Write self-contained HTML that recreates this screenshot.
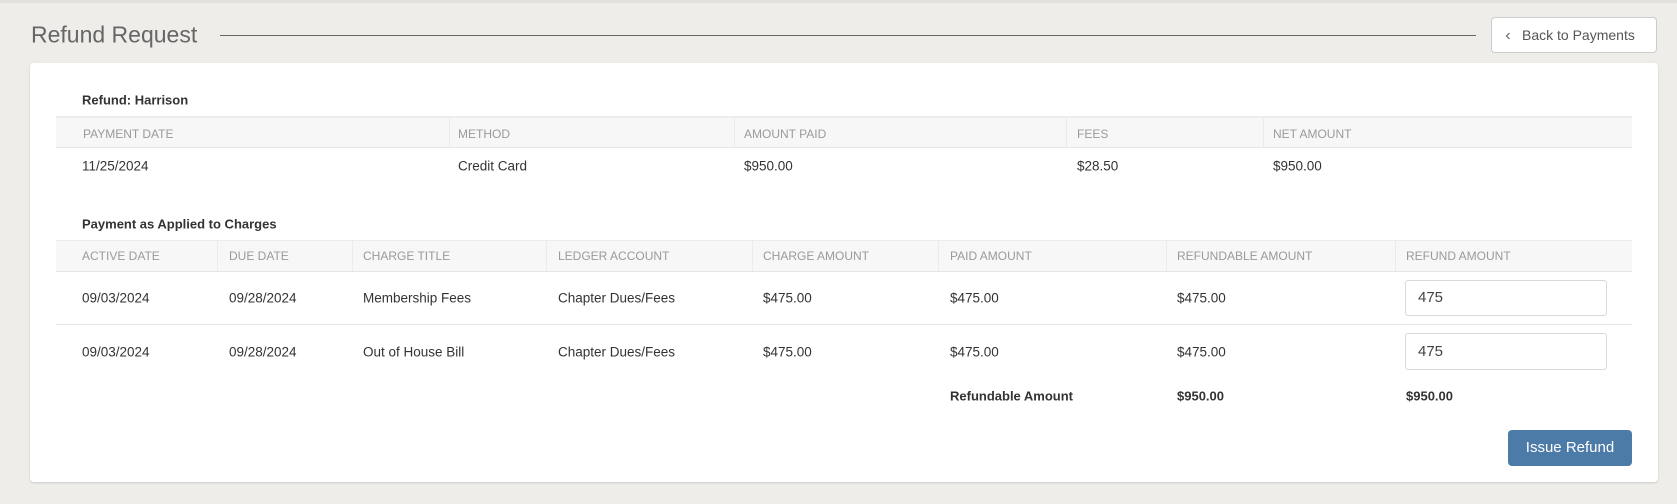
<!DOCTYPE html>
<html><head><meta charset="utf-8"><style>
*{margin:0;padding:0;box-sizing:border-box}
body{width:1677px;height:504px;background:#eeedea;font-family:"Liberation Sans",sans-serif;position:relative;overflow:hidden;color:#333}
.a{position:absolute;white-space:nowrap}
.t{font-size:13.5px;color:#333;transform:translateY(-50%)}
.h{font-size:12px;color:#9a9a9a;transform:translateY(-50%)}
.b{font-weight:bold;font-size:13px;color:#333;transform:translateY(-50%)}
.vl{position:absolute;width:1px;background:#ebebeb}
</style></head><body>
<div class="a" style="left:0;top:0;width:1677px;height:3px;background:#e2e1de"></div>
<div class="a" style="left:31px;top:35px;transform:translateY(-50%);font-size:23px;color:#666">Refund Request</div>
<div class="a" style="left:220px;top:35px;width:1256px;height:1px;background:#666"></div>
<div class="a" style="left:1491px;top:17px;width:166px;height:36px;background:#fff;border:1px solid #ccc;border-radius:4px;font-size:14px;color:#555;line-height:34px;padding-left:30px">Back to Payments</div>
<svg class="a" style="left:1505px;top:32px" width="6" height="8"><path d="M4.5 1 L1.5 4 L4.5 7" stroke="#666" stroke-width="1.2" fill="none"/></svg>

<div class="a" style="left:30px;top:63px;width:1628px;height:419px;background:#fff;border-radius:4px;box-shadow:0 1px 2px rgba(0,0,0,.15)"></div>

<div class="a b" style="left:82px;top:100px">Refund: Harrison</div>
<div class="a" style="left:56px;top:116px;width:1576px;height:32px;background:#f7f7f7;border-top:2px solid #ececec;border-bottom:1px solid #e6e6e6"></div>
<div class="vl" style="left:449px;top:118px;height:30px"></div>
<div class="vl" style="left:734px;top:118px;height:30px"></div>
<div class="vl" style="left:1066px;top:118px;height:30px"></div>
<div class="vl" style="left:1263px;top:118px;height:30px"></div>
<div class="a h" style="left:83px;top:134px">PAYMENT DATE</div>
<div class="a h" style="left:458px;top:134px">METHOD</div>
<div class="a h" style="left:744px;top:134px">AMOUNT PAID</div>
<div class="a h" style="left:1077px;top:134px">FEES</div>
<div class="a h" style="left:1273px;top:134px">NET AMOUNT</div>
<div class="a t" style="left:82px;top:166px">11/25/2024</div>
<div class="a t" style="left:458px;top:166px">Credit Card</div>
<div class="a t" style="left:744px;top:166px">$950.00</div>
<div class="a t" style="left:1077px;top:166px">$28.50</div>
<div class="a t" style="left:1273px;top:166px">$950.00</div>

<div class="a b" style="left:82px;top:224px">Payment as Applied to Charges</div>
<div class="a" style="left:56px;top:240px;width:1576px;height:32px;background:#f7f7f7;border-top:1px solid #ececec;border-bottom:1px solid #e6e6e6"></div>
<div class="vl" style="left:217px;top:241px;height:30px"></div>
<div class="vl" style="left:352px;top:241px;height:30px"></div>
<div class="vl" style="left:546px;top:241px;height:30px"></div>
<div class="vl" style="left:752px;top:241px;height:30px"></div>
<div class="vl" style="left:938px;top:241px;height:30px"></div>
<div class="vl" style="left:1166px;top:241px;height:30px"></div>
<div class="vl" style="left:1395px;top:241px;height:30px"></div>
<div class="a h" style="left:82px;top:256px">ACTIVE DATE</div>
<div class="a h" style="left:229px;top:256px">DUE DATE</div>
<div class="a h" style="left:363px;top:256px">CHARGE TITLE</div>
<div class="a h" style="left:558px;top:256px">LEDGER ACCOUNT</div>
<div class="a h" style="left:763px;top:256px">CHARGE AMOUNT</div>
<div class="a h" style="left:950px;top:256px">PAID AMOUNT</div>
<div class="a h" style="left:1177px;top:256px">REFUNDABLE AMOUNT</div>
<div class="a h" style="left:1406px;top:256px">REFUND AMOUNT</div>

<div class="a t" style="left:82px;top:298px">09/03/2024</div>
<div class="a t" style="left:229px;top:298px">09/28/2024</div>
<div class="a t" style="left:363px;top:298px">Membership Fees</div>
<div class="a t" style="left:558px;top:298px">Chapter Dues/Fees</div>
<div class="a t" style="left:763px;top:298px">$475.00</div>
<div class="a t" style="left:950px;top:298px">$475.00</div>
<div class="a t" style="left:1177px;top:298px">$475.00</div>
<div class="a" style="left:1405px;top:280px;width:202px;height:36px;border:1px solid #d9d9d9;border-radius:3px;font-size:15px;color:#444;line-height:34px;padding-left:12px">475</div>
<div class="a" style="left:56px;top:324px;width:1576px;height:1px;background:#e6e6e6"></div>

<div class="a t" style="left:82px;top:352px">09/03/2024</div>
<div class="a t" style="left:229px;top:352px">09/28/2024</div>
<div class="a t" style="left:363px;top:352px">Out of House Bill</div>
<div class="a t" style="left:558px;top:352px">Chapter Dues/Fees</div>
<div class="a t" style="left:763px;top:352px">$475.00</div>
<div class="a t" style="left:950px;top:352px">$475.00</div>
<div class="a t" style="left:1177px;top:352px">$475.00</div>
<div class="a" style="left:1405px;top:333px;width:202px;height:37px;border:1px solid #d9d9d9;border-radius:3px;font-size:15px;color:#444;line-height:35px;padding-left:12px">475</div>

<div class="a b" style="left:950px;top:396px">Refundable Amount</div>
<div class="a b" style="left:1177px;top:396px">$950.00</div>
<div class="a b" style="left:1406px;top:396px">$950.00</div>

<div class="a" style="left:1508px;top:430px;width:124px;height:36px;background:#4b7ba6;border-radius:4px;color:#fff;font-size:15px;line-height:36px;text-align:center">Issue Refund</div>
</body></html>
